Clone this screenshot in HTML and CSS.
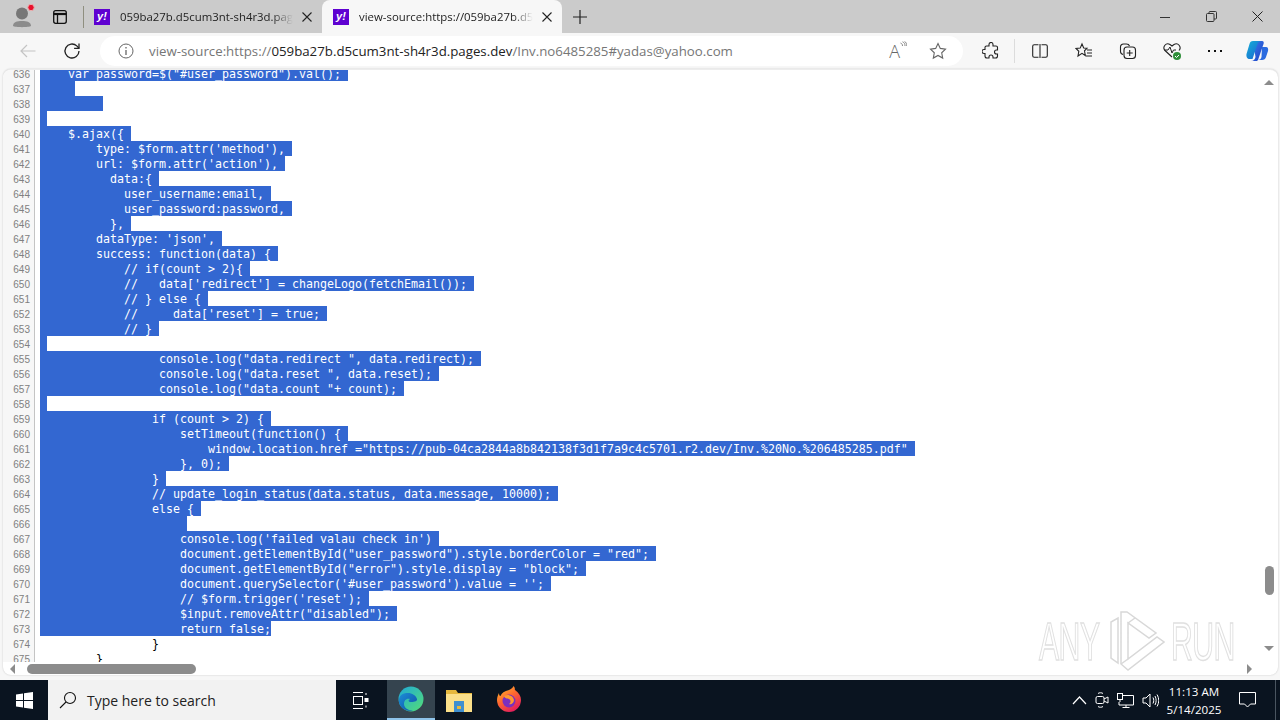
FILE: index.html
```html
<!DOCTYPE html>
<html lang="en">
<head>
  <meta charset="UTF-8">
  <title>view-source</title>
  <link rel="stylesheet" href="styles.css">
</head>
<body>
  <div class="tabstrip">
    <div class="strip-btn profile">
      <svg width="30" height="28" viewBox="0 0 30 28"><circle cx="15" cy="10.500" r="6" fill="#777"/><path d="M6 23c0-4 4-5 9-5s9 1 9 5c-2 1.500-16 1.500-18 0z" fill="#8c8c8c"/><circle cx="24" cy="4.500" r="3.200" fill="#e8112d" stroke="#e9b0b0"/></svg>
    </div>
    <div class="strip-btn workspace">
      <svg width="16" height="16" viewBox="0 0 16 16" fill="none" stroke="#111" stroke-width="1.300"><rect x="1.700" y="1.700" width="12.600" height="12.600" rx="2"/><path d="M1.700 5h12.600" stroke-width="2.200"/><path d="M5.500 4v10"/></svg>
    </div>
    <div class="divider"></div>
    <div class="tab">
      <span class="favicon">y!</span>
      <span class="tab-title">059ba27b.d5cum3nt-sh4r3d.pag</span>
      <svg class="tab-x" width="10" height="10" viewBox="0 0 10 10"><path d="M.5.500l9 9M9.500.500l-9 9" stroke="#222" stroke-width="1.100"/></svg>
    </div>
    <div class="tab active">
      <span class="favicon">y!</span>
      <span class="tab-title">view-source:https://059ba27b.d5</span>
      <svg class="tab-x" width="10" height="10" viewBox="0 0 10 10"><path d="M.5.500l9 9M9.500.500l-9 9" stroke="#222" stroke-width="1.100"/></svg>
    </div>
    <div class="new-tab">
      <svg width="16" height="16" viewBox="0 0 16 16"><path d="M8 1v14M1 8h14" stroke="#222" stroke-width="1.200"/></svg>
    </div>
    <div class="strip-space"></div>
    <div class="win-btn"><svg width="10" height="10" viewBox="0 0 10 10"><path d="M0 5.500h10" stroke="#333"/></svg></div>
    <div class="win-btn"><svg width="11" height="11" viewBox="0 0 11 11" fill="none" stroke="#333"><rect x=".5" y="2.500" width="7.500" height="8" rx="1"/><path d="M3 2.500V1.500a1 1 0 0 1 1-1h5.500a1 1 0 0 1 1 1V7a1 1 0 0 1-1 1H8"/></svg></div>
    <div class="win-btn"><svg width="11" height="11" viewBox="0 0 11 11"><path d="M.5.500l10 10M10.500.500l-10 10" stroke="#222"/></svg></div>
  </div>

  <div class="toolbar">
    <div class="tool">
      <svg width="16" height="14" viewBox="0 0 16 14" fill="none" stroke="#c4c4c4" stroke-width="1.200"><path d="M15.500 7H1M7 1L1 7l6 6"/></svg>
    </div>
    <div class="tool">
      <svg width="18" height="18" viewBox="0 0 18 18" fill="none" stroke="#222" stroke-width="1.300"><path d="M16 9a7 7 0 1 1-2.200-5.100L16 6.200"/><path d="M16 1.500v4.900h-4.900"/></svg>
    </div>
    <div class="address">
      <svg class="info" width="16" height="16" viewBox="0 0 16 16" fill="none" stroke="#666"><circle cx="8" cy="8" r="7"/><path d="M8 7v5M8 4v1.500" stroke-width="1.300"/></svg>
      <span class="url"><span class="dim">view-source:https://</span>059ba27b.d5cum3nt-sh4r3d.pages.dev<span class="dim">/Inv.no6485285#yadas@yahoo.com</span></span>
      <span class="read-aloud">A<svg width="7" height="10" viewBox="0 0 7 10" fill="none" stroke="#888"><path d="M.5 2c1.500.5 2 1.500 2 3M2.500.8C4.500 1.500 5 3 5 5M4.500.3C6 1 6.800 3 6.800 5"/></svg></span>
      <svg class="fav" width="18" height="18" viewBox="0 0 18 18" fill="none" stroke="#666" stroke-width="1.100"><path d="M9 1.500l2.300 4.900 5.200.7-3.800 3.700 1 5.300L9 13.500l-4.700 2.600 1-5.300L1.500 7.100l5.200-.7z"/></svg>
    </div>
    <div class="tool first-right">
      <svg width="18" height="18" viewBox="0 0 18 18" fill="none" stroke="#222" stroke-width="1.100"><path d="M7 2.500a2 2 0 0 1 4 0V4h3a1.500 1.500 0 0 1 1.500 1.500V8h-1a2 2 0 0 0 0 4h1v2a2 2 0 0 1-2 2h-2.500v-1a2 2 0 0 0-4 0v1H5a2 2 0 0 1-2-2v-2.500H2a2 2 0 0 1 0-4h1V5.500A1.500 1.500 0 0 1 4.500 4H7z"/></svg>
    </div>
    <div class="tool-sep"></div>
    <div class="tool">
      <svg width="16" height="14" viewBox="0 0 16 14" fill="none" stroke="#222" stroke-width="1.100"><rect x=".7" y=".7" width="14.600" height="12.600" rx="1.500"/><path d="M8 0v14" stroke="#f7f7f7" stroke-width="3"/><path d="M8 0v14"/></svg>
    </div>
    <div class="tool">
      <svg width="18" height="18" viewBox="0 0 18 18" fill="none" stroke="#222" stroke-width="1.100"><path d="M7 2l1.700 4 3.300.3-2.500 2.500.8 4.700L7 11.300 3 14l.8-4.700L1 6.500l4.200-.4z"/><path d="M12 8h5M12 11h5M11 14h6"/></svg>
    </div>
    <div class="tool">
      <svg width="18" height="18" viewBox="0 0 18 18" fill="none" stroke="#222" stroke-width="1.100"><path d="M4 12.500C2 12 1.500 11 1.500 9.500V5a3 3 0 0 1 3-3h3c1.500 0 2.500.5 3 2"/><rect x="5" y="5" width="11.500" height="11.500" rx="3"/><path d="M10.700 8v6M7.700 11h6"/></svg>
    </div>
    <div class="tool">
      <svg width="20" height="20" viewBox="0 0 20 20" fill="none"><path d="M10 16L3 9.500C0 6 4 1 8 3.500L10 5l2-1.500C16 1 20 6 17 9.500" stroke="#222" stroke-width="1.100"/><path d="M2 9h4l2-3 2 6 1.500-3H14" stroke="#222"/><circle cx="15" cy="15" r="4" fill="#2f8f3a"/><path d="M13 15l1.500 1.500L17 14" stroke="#fff"/></svg>
    </div>
    <div class="tool narrow"><span class="dots"></span></div>
    <div class="tool narrow">
      <svg width="24" height="24" viewBox="0 0 24 24"><defs><linearGradient id="cpa" x1="0" y1="0" x2="1" y2="1"><stop offset="0" stop-color="#16b0d8"/><stop offset="1" stop-color="#1b5fcf"/></linearGradient><linearGradient id="cpb" x1="0" y1="0" x2="1" y2="1"><stop offset="0" stop-color="#3d7ff0"/><stop offset="1" stop-color="#1c3fc0"/></linearGradient></defs><path d="M8 2h9c2 0 2 2 1.500 3L13 21c-.5 1-1.500 1-3 1H6c3 0 4-2 4.500-4z" fill="url(#cpb)"/><path d="M8 2c-2 0-3 1-3.500 3L1.500 15c-.5 3 1 5 3 5h3l5-15c.5-2 2-3 4-3z" fill="url(#cpa)"/><path d="M17 8h4c2 0 2.500 2 2 4l-2 6c-.5 2-2 3-4 3h-4c2 0 3-1 3.500-3z" fill="#2a6be0"/></svg>
    </div>
  </div>

  <div class="pane">
    <div class="sheet">
      <div class="viewer">
        <div class="source">
          <div class="ln"><span class="n">636</span><span class="c"><span class="sel">    var password=$("#user_password").val(); </span></span></div>
          <div class="ln"><span class="n">637</span><span class="c"><span class="sel">     </span></span></div>
          <div class="ln"><span class="n">638</span><span class="c"><span class="sel">         </span></span></div>
          <div class="ln"><span class="n">639</span><span class="c"><span class="sel"> </span></span></div>
          <div class="ln"><span class="n">640</span><span class="c"><span class="sel">    $.ajax({ </span></span></div>
          <div class="ln"><span class="n">641</span><span class="c"><span class="sel">        type: $form.attr('method'), </span></span></div>
          <div class="ln"><span class="n">642</span><span class="c"><span class="sel">        url: $form.attr('action'), </span></span></div>
          <div class="ln"><span class="n">643</span><span class="c"><span class="sel">          data:{ </span></span></div>
          <div class="ln"><span class="n">644</span><span class="c"><span class="sel">            user_username:email, </span></span></div>
          <div class="ln"><span class="n">645</span><span class="c"><span class="sel">            user_password:password, </span></span></div>
          <div class="ln"><span class="n">646</span><span class="c"><span class="sel">          }, </span></span></div>
          <div class="ln"><span class="n">647</span><span class="c"><span class="sel">        dataType: 'json', </span></span></div>
          <div class="ln"><span class="n">648</span><span class="c"><span class="sel">        success: function(data) { </span></span></div>
          <div class="ln"><span class="n">649</span><span class="c"><span class="sel">            // if(count &gt; 2){ </span></span></div>
          <div class="ln"><span class="n">650</span><span class="c"><span class="sel">            //   data['redirect'] = changeLogo(fetchEmail()); </span></span></div>
          <div class="ln"><span class="n">651</span><span class="c"><span class="sel">            // } else { </span></span></div>
          <div class="ln"><span class="n">652</span><span class="c"><span class="sel">            //     data['reset'] = true; </span></span></div>
          <div class="ln"><span class="n">653</span><span class="c"><span class="sel">            // } </span></span></div>
          <div class="ln"><span class="n">654</span><span class="c"><span class="sel"> </span></span></div>
          <div class="ln"><span class="n">655</span><span class="c"><span class="sel">                 console.log("data.redirect ", data.redirect); </span></span></div>
          <div class="ln"><span class="n">656</span><span class="c"><span class="sel">                 console.log("data.reset ", data.reset); </span></span></div>
          <div class="ln"><span class="n">657</span><span class="c"><span class="sel">                 console.log("data.count "+ count); </span></span></div>
          <div class="ln"><span class="n">658</span><span class="c"><span class="sel"> </span></span></div>
          <div class="ln"><span class="n">659</span><span class="c"><span class="sel">                if (count &gt; 2) { </span></span></div>
          <div class="ln"><span class="n">660</span><span class="c"><span class="sel">                    setTimeout(function() { </span></span></div>
          <div class="ln"><span class="n">661</span><span class="c"><span class="sel">                        window.location.href ="https://pub-04ca2844a8b842138f3d1f7a9c4c5701.r2.dev/Inv.%20No.%206485285.pdf" </span></span></div>
          <div class="ln"><span class="n">662</span><span class="c"><span class="sel">                    }, 0); </span></span></div>
          <div class="ln"><span class="n">663</span><span class="c"><span class="sel">                } </span></span></div>
          <div class="ln"><span class="n">664</span><span class="c"><span class="sel">                // update_login_status(data.status, data.message, 10000); </span></span></div>
          <div class="ln"><span class="n">665</span><span class="c"><span class="sel">                else { </span></span></div>
          <div class="ln"><span class="n">666</span><span class="c"><span class="sel">                     </span></span></div>
          <div class="ln"><span class="n">667</span><span class="c"><span class="sel">                    console.log('failed valau check in') </span></span></div>
          <div class="ln"><span class="n">668</span><span class="c"><span class="sel">                    document.getElementById("user_password").style.borderColor = "red"; </span></span></div>
          <div class="ln"><span class="n">669</span><span class="c"><span class="sel">                    document.getElementById("error").style.display = "block"; </span></span></div>
          <div class="ln"><span class="n">670</span><span class="c"><span class="sel">                    document.querySelector('#user_password').value = ''; </span></span></div>
          <div class="ln"><span class="n">671</span><span class="c"><span class="sel">                    // $form.trigger('reset'); </span></span></div>
          <div class="ln"><span class="n">672</span><span class="c"><span class="sel">                    $input.removeAttr("disabled"); </span></span></div>
          <div class="ln"><span class="n">673</span><span class="c"><span class="sel">                    return false;</span></span></div>
          <div class="ln"><span class="n">674</span><span class="c">                }</span></div>
          <div class="ln"><span class="n">675</span><span class="c">        }</span></div>
        </div>
        <div class="vscroll">
          <span class="arrow up"></span>
          <div class="vtrack"><div class="vthumb"></div></div>
          <span class="arrow down"></span>
        </div>
      </div>
      <div class="hscroll">
        <span class="arrow left"></span>
        <div class="hthumb"></div>
        <span class="arrow right"></span>
      </div>
      <div class="watermark">
        <span class="wm-text">ANY</span>
        <svg width="58" height="62" viewBox="0 0 58 62" fill="none" stroke="#d8d8d8" stroke-width="1.500"><path d="M14 2v52l7 6 36-28-7-5L21 49V13l21 15 7-5L20 2z"/><path d="M4 12v36l7 5V8z"/><path d="M21 13l7-5"/><path d="M14 54l7-5"/></svg>
        <span class="wm-text">RUN</span>
      </div>
    </div>
  </div>

  <div class="taskbar">
    <div class="start">
      <svg width="17" height="17" viewBox="0 0 17 17" fill="#fff"><path d="M0 2.400L7 1.400V8H0zM8 1.300L17 0v8H8zM0 9h7v6.600L0 14.600zM8 9h9v8L8 15.700z"/></svg>
    </div>
    <div class="search">
      <svg width="18" height="18" viewBox="0 0 18 18" fill="none" stroke="#111" stroke-width="1.100"><circle cx="11" cy="7" r="5.500"/><path d="M7 11l-6 6"/></svg>
      <span>Type here to search</span>
    </div>
    <div class="task">
      <svg width="17" height="17" viewBox="0 0 17 17" fill="none" stroke="#fff"><path d="M1 .5h10M1 16.500h10"/><rect x="1.500" y="4.500" width="9" height="8"/><path d="M14 1v2M14 13.500v2"/><rect x="13" y="6.500" width="3" height="3" fill="#fff"/></svg>
    </div>
    <div class="task open">
      <svg width="26" height="26" viewBox="0 0 26 26"><defs><linearGradient id="edgea" x1="0" y1="0" x2="1" y2="1"><stop offset="0" stop-color="#1fa9d8"/><stop offset="1" stop-color="#54de76"/></linearGradient><linearGradient id="edgeb" x1="0" y1="0" x2="1" y2="1"><stop offset="0" stop-color="#1c8fd6"/><stop offset="1" stop-color="#0f4fa8"/></linearGradient></defs><circle cx="13" cy="13" r="12.500" fill="url(#edgea)"/><path d="M.8 15C1 8 6 7 10 7c4 0 8 2.500 9 6 .5 2-2 3-6 3-3 0-3-2-1-3-4-1-6 2-6 5 0 3 3 6.500 9 6.500C8 26 1.500 22 .8 15z" fill="url(#edgeb)"/></svg>
    </div>
    <div class="task">
      <svg width="26" height="24" viewBox="0 0 26 24"><path d="M0 2h10l2 3h14v19H0z" fill="#e6b83e"/><rect y="6" width="26" height="18" fill="#fbe08a"/><rect x="8" y="13" width="10" height="11" fill="#3f8fd0"/><rect x="11" y="18" width="4" height="3" fill="#e6b83e"/></svg>
    </div>
    <div class="task">
      <svg width="28" height="28" viewBox="0 0 28 28"><defs><linearGradient id="ffa" x1="0" y1="0" x2=".6" y2="1"><stop offset="0" stop-color="#ffc92e"/><stop offset=".5" stop-color="#ff6a2e"/><stop offset="1" stop-color="#e21f5c"/></linearGradient></defs><path d="M14 4c3-1 4-3 4.500-4 2 2 1 3 1.500 4 4 3 6 6 6 10a12 12 0 1 1-24 0c0-3 1-5 2-7 0 2 .5 3 1.500 3 1-3 4-5 8.500-6z" fill="url(#ffa)"/><circle cx="14" cy="15" r="6.500" fill="#7b2fbf"/><path d="M9 10c3-2 9-1 10 4 0 3-3 5-5 4 2-1 2-4 0-5-2-1-4 0-5-3z" fill="#ff9a2e"/></svg>
    </div>
    <div class="task-space"></div>
    <div class="tray">
      <svg width="15" height="9" viewBox="0 0 15 9" fill="none" stroke="#fff" stroke-width="1.200"><path d="M1 8l6.500-7L14 8"/></svg>
      <svg width="14" height="18" viewBox="0 0 14 18" fill="none" stroke="#fff"><rect x="1" y="5.500" width="8" height="7" rx="1.500"/><path d="M9 8l4-2v6l-4-2M3 2.500c1-1 4-1 5 0M3 15.500c1 1 4 1 5 0"/></svg>
      <svg width="17" height="15" viewBox="0 0 17 15" fill="none" stroke="#fff"><path d="M5 2.500h11.500v9.500H2V9M9 12v2.500M5.500 14.500h7"/><rect x=".5" y=".5" width="5" height="6" fill="#0a1420"/><path d="M3 7v2"/></svg>
      <svg width="17" height="15" viewBox="0 0 17 15" fill="none" stroke="#fff"><path d="M1 5v5h3l4 4V1L4 5z"/><path d="M11 4.500c1 2 1 4 0 6M13 3c1.500 3 1.500 6 0 9M15 1.500c2.300 4 2.300 8 0 12"/></svg>
    </div>
    <div class="clock">
      <span>11:13 AM</span>
      <span>5/14/2025</span>
    </div>
    <div class="action">
      <svg width="17" height="16" viewBox="0 0 17 16" fill="none" stroke="#fff"><path d="M.5.500h16v11.500h-5L8.500 15l-3-3h-5z"/></svg>
    </div>
    <div class="peek"></div>
  </div>
</body>
</html>
```

FILE: styles.css
```css
* { box-sizing: border-box; margin: 0; padding: 0; }
body {
  width: 1280px;
  height: 720px;
  overflow: hidden;
  display: flex;
  flex-direction: column;
  background: #f7f7f7;
  font-family: "Open Sans", "Noto Sans", sans-serif;
}

/* tab strip */
.tabstrip {
  height: 33px;
  flex: none;
  display: flex;
  align-items: center;
  background: #cbcbcb;
}
.strip-btn {
  display: flex;
  justify-content: center;
  align-items: center;
}
.profile { width: 44px; }
.workspace { width: 32px; margin-right: 7px; }
.divider {
  width: 1px;
  height: 22px;
  background: #8f8f80;
  margin-right: 1px;
}
.tab {
  width: 237px;
  height: 33px;
  display: flex;
  align-items: center;
  padding: 0 8px 0 9px;
  font-size: 11.4px;
  color: #222;
}
.tab.active {
  width: 240px;
  background: #f7f7f7;
  border-radius: 8px 8px 0 0;
  padding-left: 11px;
}
.favicon {
  width: 16px;
  height: 16px;
  flex: none;
  background: #5f01d1;
  color: #fff;
  font: italic bold 11px/15px "Liberation Sans", sans-serif;
  text-align: center;
}
.tab-title {
  flex: 1;
  margin-left: 10px;
  white-space: nowrap;
  -webkit-mask-image: linear-gradient(to right, #000 88%, transparent 100%);
  mask-image: linear-gradient(to right, #000 88%, transparent 100%);
}
.tab-x { margin: 0 2px 0 9px; flex: none; }
.new-tab {
  width: 36px;
  display: flex;
  justify-content: center;
}
.strip-space { flex: 1; }
.win-btn {
  width: 46px;
  height: 33px;
  display: flex;
  justify-content: center;
  align-items: center;
}

/* toolbar */
.toolbar {
  height: 36px;
  flex: none;
  display: flex;
  align-items: center;
  padding-left: 6px;
  background: #f7f7f7;
}
.tool {
  width: 44px;
  height: 30px;
  flex: none;
  display: flex;
  justify-content: center;
  align-items: center;
}
.tool.narrow { width: 42px; }
.first-right { margin-left: 6px; }
.tool-sep {
  width: 1px;
  height: 24px;
  background: #dcdcdc;
  margin: 0 3px 0 1px;
}
.address {
  width: 863px;
  height: 30px;
  margin-left: 6px;
  flex: none;
  display: flex;
  align-items: center;
  background: #fff;
  border-radius: 15px;
  padding-left: 18px;
  font-size: 13.27px;
  color: #222;
}
.info { flex: none; }
.url {
  flex: 1;
  margin-left: 15px;
  white-space: nowrap;
}
.dim { color: #767676; }
.read-aloud {
  display: flex;
  align-items: flex-start;
  font-size: 18px;
  line-height: 20px;
  font-weight: 300;
  color: #666;
  margin-right: 22px;
}
.fav { margin-right: 16px; }
.dots {
  width: 14px;
  height: 2px;
  background: radial-gradient(circle at 1px 1px, #111 1px, transparent 1.2px) 0 0 / 6px 2px repeat-x;
}

/* source viewer */
.pane {
  flex: 1;
  min-height: 0;
  padding: 0 2px 5px 3px;
  background: #f7f7f7;
}
.sheet {
  position: relative;
  height: 100%;
  display: flex;
  flex-direction: column;
  overflow: hidden;
  background: #fff;
  border-top: 1px solid #ededed;
  border-radius: 8px;
  box-shadow: 0 0 2px rgba(0, 0, 0, 0.2);
}
.viewer {
  flex: 1;
  min-height: 0;
  display: flex;
}
.source {
  flex: 1;
  min-width: 0;
  overflow: hidden;
  font: 11.63px/17px "DejaVu Sans Mono", monospace;
  color: #000;
}
.source .ln:first-child { margin-top: -4px; }
.ln {
  height: 15px;
  display: flex;
  white-space: pre;
}
.n {
  width: 32px;
  height: 15px;
  flex: none;
  padding-right: 4px;
  margin-right: 5px;
  text-align: right;
  font: 10px/17px "Liberation Sans", sans-serif;
  color: #808080;
  background: #f7f7f7;
  border-right: 1px solid #c4c4c4;
}
.sel {
  background: #3367d1;
  color: #fff;
  display: inline-block;
  height: 15px;
}

/* scrollbars */
.vscroll {
  width: 14px;
  margin-right: 2px;
  flex: none;
  display: flex;
  flex-direction: column;
  align-items: center;
  padding: 10px 0 11px;
}
.vtrack {
  flex: 1;
  padding-top: 481px;
}
.vthumb {
  width: 9px;
  height: 29px;
  border-radius: 5px;
  background: #8c8c8c;
}
.hscroll {
  height: 13px;
  flex: none;
  display: flex;
  align-items: center;
  padding-left: 7px;
}
.hthumb {
  width: 169px;
  height: 10px;
  margin-left: 12px;
  border-radius: 5px;
  background: #8c8c8c;
}
.arrow { width: 0; height: 0; display: block; flex: none; }
.arrow.up { border: 5px solid transparent; border-top: 0; border-bottom: 5px solid #8c8c8c; }
.arrow.down { border: 5px solid transparent; border-bottom: 0; border-top: 5px solid #8c8c8c; margin-top: auto; }
.arrow.left { border: 5px solid transparent; border-left: 0; border-right: 5px solid #8c8c8c; }
.arrow.right { border: 5px solid transparent; border-right: 0; border-left: 5px solid #8c8c8c; margin-left: 1051px; }

.watermark {
  position: absolute;
  left: 1036px;
  top: 540px;
  width: 194px;
  height: 62px;
  display: flex;
  justify-content: space-between;
  align-items: center;
}
.wm-text {
  width: 62px;
  font: 400 54px/1 "Liberation Sans", sans-serif;
  color: transparent;
  -webkit-text-stroke: 1.500px #e0e0e0;
  letter-spacing: -1px;
  transform: scaleX(0.56);
  transform-origin: left center;
  white-space: nowrap;
}

/* taskbar */
.taskbar {
  height: 40px;
  flex: none;
  display: flex;
  align-items: center;
  background: #0a1420;
  color: #fff;
}
.start {
  width: 48px;
  display: flex;
  justify-content: center;
}
.search {
  width: 288px;
  height: 40px;
  display: flex;
  align-items: center;
  gap: 10px;
  padding-left: 11px;
  background: #f2f2f2;
  color: #222;
  font-size: 14px;
}
.task {
  width: 48px;
  height: 40px;
  display: flex;
  justify-content: center;
  align-items: center;
  margin-right: 2px;
}
.task:nth-child(3) { margin-right: 3px; }
.task.open {
  background: #35444f;
  border-bottom: 2px solid #8fc4ea;
  margin-right: 0;
}
.task-space { flex: 1; }
.tray {
  display: flex;
  align-items: center;
  gap: 8px;
  margin-right: 4px;
}
.clock {
  width: 62px;
  display: flex;
  flex-direction: column;
  align-items: center;
  gap: 1px;
  font-size: 11.6px;
  line-height: 17px;
  white-space: nowrap;
}
.action {
  width: 44px;
  display: flex;
  justify-content: center;
}
.peek {
  width: 1px;
  height: 40px;
  margin: 0 4px 0 6px;
  background: #4a5560;
}
```
